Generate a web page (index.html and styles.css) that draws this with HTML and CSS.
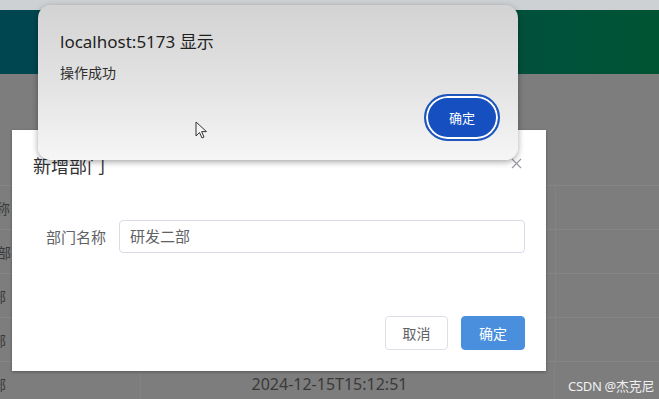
FILE: index.html
```html
<!DOCTYPE HTML>
<html>
<head>
    <meta charset="UTF-8" />
    <link rel="stylesheet" href="styles.css">
</head>
<body>
    <div class="topbar"></div>
    <div class="header"></div>

    <div class="table">
        <div class="row"><span class="cell first"><span class="txt head">名称</span></span><span class="cell"></span><span class="cell"></span></div>
        <div class="row"><span class="cell first"><span class="txt">学工部</span></span><span class="cell"></span><span class="cell"></span></div>
        <div class="row"><span class="cell first"><span class="txt cut">教研部</span></span><span class="cell"></span><span class="cell"></span></div>
        <div class="row"><span class="cell first"><span class="txt cut">咨询部</span></span><span class="cell"></span><span class="cell"></span></div>
        <div class="row"><span class="cell first"><span class="txt cut">就业部</span></span><span class="cell date">2024-12-15T15:12:51</span><span class="cell"></span></div>
    </div>

    <div class="dialog">
        <div class="dialog-header">
            <span class="dialog-title">新增部门</span>
            <svg class="dialog-close" width="11" height="11" viewBox="0 0 11 11">
                <path d="M1 1 L10 10 M10 1 L1 10" stroke="#9a9ca2" stroke-width="1.2" fill="none"/>
            </svg>
        </div>
        <div class="dialog-body">
            <label class="form-label">部门名称</label>
            <div class="form-input">研发二部</div>
        </div>
        <div class="dialog-footer">
            <button class="btn">取消</button>
            <button class="btn btn-primary">确定</button>
        </div>
    </div>

    <div class="alert">
        <div class="alert-title">localhost:5173 显示</div>
        <div class="alert-text">操作成功</div>
        <div class="alert-actions">
            <button class="alert-btn">确定</button>
        </div>
    </div>

    <svg class="cursor" width="14" height="20" viewBox="0 0 14 20">
        <path d="M1 1 L1 15 L4.5 11.5 L7 17 L9 16 L6.6 10.6 L11.5 10.6 Z" fill="#f4f4f4" stroke="#333" stroke-width="1" stroke-linejoin="round"/>
    </svg>

    <div class="watermark">CSDN @杰克尼</div>
</body>
</html>
```

FILE: styles.css
```css
html, body {
    margin: 0;
    height: 100%;
    overflow: hidden;
}
body {
    font-family: "Noto Sans", "Noto Sans CJK SC", sans-serif;
    background: #7d7d7d;
    position: relative;
}

.topbar {
    height: 10px;
    background: #cdd1d4;
}
.header {
    height: 64px;
    background: linear-gradient(90deg, #004650 0%, #004a4e 40%, #005433 100%);
}

/* dimmed table behind the mask */
.table {
    margin-top: 111px;
    color: #3a3a3a;
}
.row {
    display: flex;
    height: 43px;
    align-items: center;
    border-top: 1px solid #858585;
}
.cell {
    font-size: 15px;
    border-right: 1px solid #838383;
    height: 100%;
    display: flex;
    align-items: center;
    justify-content: center;
}
.cell.first {
    width: 140px;
    justify-content: flex-start;
    font-size: 14px;
    white-space: nowrap;
}
.txt {
    margin-left: -31px;
}
.txt.head {
    margin-left: -18px;
}
.txt.cut {
    margin-left: -36px;
}
.cell:nth-child(2) {
    width: 414px;
}
.cell:nth-child(3) {
    flex: 1;
    border-right: none;
}
.date {
    font-size: 16px;
    padding-right: 36px;
    box-sizing: border-box;
}

/* element style dialog */
.dialog {
    position: absolute;
    left: 12px;
    top: 130px;
    width: 534px;
    height: 241px;
    background: #ffffff;
    box-shadow: 0 1px 3px rgba(0, 0, 0, 0.3);
    display: flex;
    flex-direction: column;
    box-sizing: border-box;
}
.dialog-header {
    display: flex;
    justify-content: space-between;
    align-items: center;
    padding: 22px 24px 0 21px;
    height: 26px;
}
.dialog-title {
    font-size: 18px;
    color: #303133;
}
.dialog-close {
    margin-top: -4px;
}
.dialog-body {
    display: flex;
    align-items: center;
    padding: 42px 21px 0 21px;
}
.form-label {
    width: 86px;
    text-align: right;
    padding-right: 13px;
    box-sizing: border-box;
    font-size: 15px;
    color: #606266;
    white-space: nowrap;
}
.form-input {
    flex: 1;
    height: 33px;
    line-height: 31px;
    box-sizing: border-box;
    border: 1px solid #d8dce6;
    border-radius: 4px;
    padding: 0 10px;
    font-size: 15px;
    color: #606266;
}
.dialog-footer {
    display: flex;
    justify-content: flex-end;
    gap: 13px;
    margin-top: auto;
    padding: 0 21px 21px;
}
.btn {
    font-family: inherit;
    width: 63px;
    height: 34px;
    font-size: 14px;
    border: 1px solid #dcdfe6;
    border-radius: 4px;
    background: #ffffff;
    color: #606266;
    padding: 0;
}
.btn-primary {
    width: 64px;
    background: #4a8fdd;
    border-color: #4a8fdd;
    color: #ffffff;
}

/* browser alert box */
.alert {
    position: absolute;
    left: 38px;
    top: 5px;
    width: 480px;
    height: 155px;
    box-sizing: border-box;
    border-radius: 13px;
    background: linear-gradient(180deg, #d3d3d3 0%, #e4e4e4 55%, #f6f6f6 100%);
    box-shadow: 0 2px 6px rgba(0, 0, 0, 0.35);
    padding: 26px 18px 0 22px;
    display: flex;
    flex-direction: column;
}
.alert-title {
    font-size: 17px;
    color: #1f1f1f;
    line-height: 22px;
}
.alert-text {
    font-size: 14px;
    color: #2e2e2e;
    margin-top: 9px;
}
.alert-actions {
    display: flex;
    justify-content: flex-end;
    margin-top: 12px;
}
.alert-btn {
    font-family: inherit;
    width: 76px;
    height: 47px;
    border-radius: 24px;
    border: 2px solid #1e56bd;
    background: #1650c0;
    box-shadow: inset 0 0 0 2px #ffffff;
    color: #ffffff;
    font-size: 13px;
    padding: 0;
}

.cursor {
    position: absolute;
    left: 195px;
    top: 121px;
}

.watermark {
    position: absolute;
    left: 568px;
    top: 376px;
    font-size: 13px;
    color: #f0f0f0;
    letter-spacing: -0.3px;
}
```
